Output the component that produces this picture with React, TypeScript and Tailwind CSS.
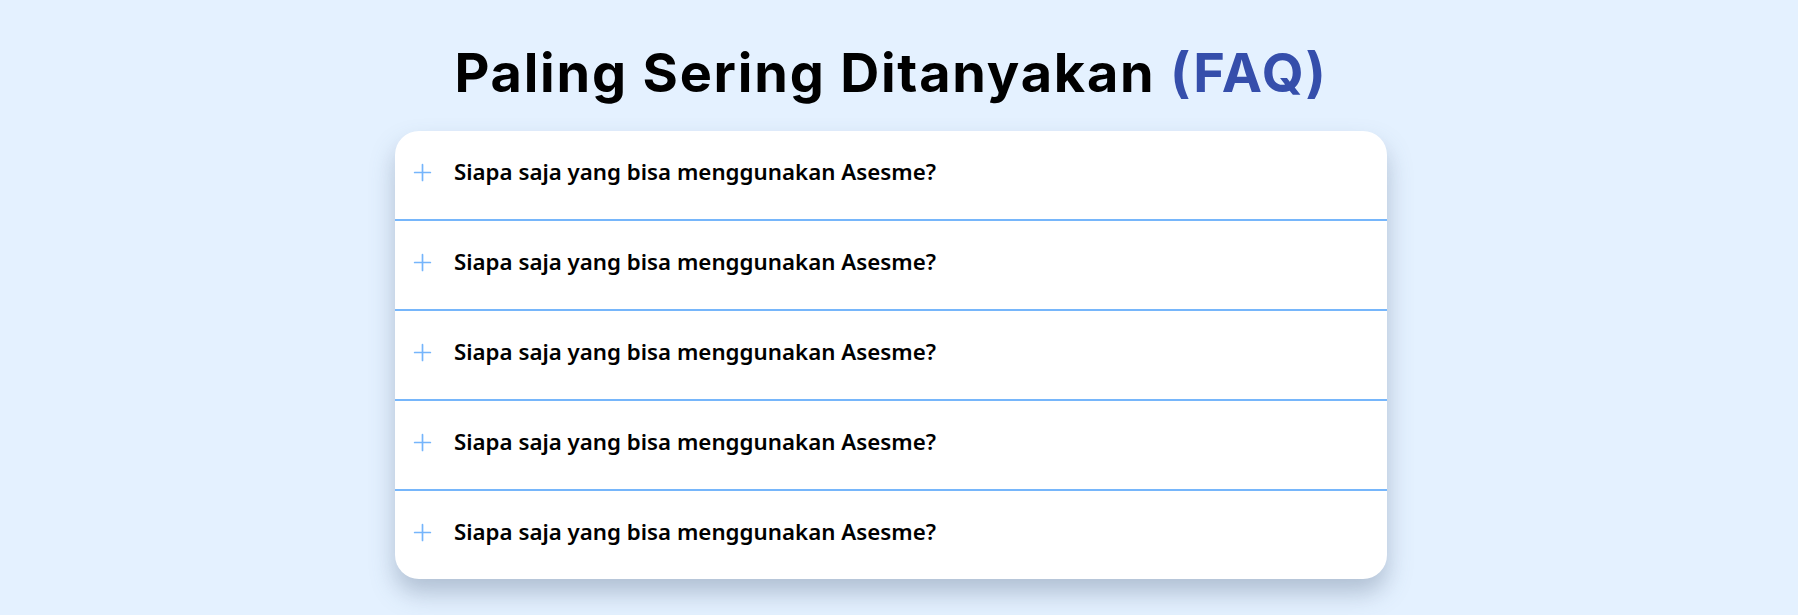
import { Plus } from 'lucide-react';

const questions = [
  'Siapa saja yang bisa menggunakan Asesme?',
  'Siapa saja yang bisa menggunakan Asesme?',
  'Siapa saja yang bisa menggunakan Asesme?',
  'Siapa saja yang bisa menggunakan Asesme?',
  'Siapa saja yang bisa menggunakan Asesme?',
];

function App() {
  return (
    <div className="min-h-[615px] w-full bg-[#e4f1ff] pr-4">
      <section className="flex flex-col items-center pt-[37px]">
        <h1 className="font-['Inter',sans-serif] text-[54px] leading-[72px] font-bold tracking-[1.8px] text-black">
          Paling Sering Ditanyakan <span className="text-[#354eab]">(FAQ)</span>
        </h1>

        <div className="mt-[22px] w-[992px] overflow-hidden rounded-3xl bg-white shadow-[0_14px_24px_rgba(80,100,130,0.35)]">
          {questions.map((q, i) => (
            <button
              key={i}
              className={`flex h-[88px] w-full items-center gap-[18px] pl-[14px] pr-[19px] pb-[6px] text-left ${
                i < questions.length - 1 ? 'border-b-2 border-b-[#76b6fb] h-[90px]' : ''
              }`}
            >
              <Plus className="h-[27px] w-[27px] shrink-0 text-[#75b5fb]" strokeWidth={1.5} />
              <span className="font-['Noto_Sans',sans-serif] text-[22.3px] font-semibold text-black">
                {q}
              </span>
            </button>
          ))}
        </div>
      </section>
    </div>
  );
}

export default App;
